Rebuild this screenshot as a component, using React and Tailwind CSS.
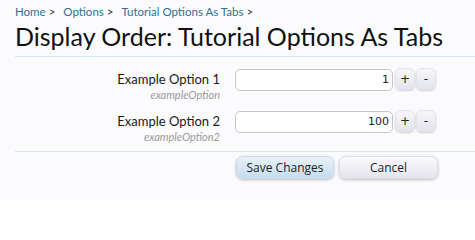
import React from "react";

function Spin({ children }) {
  return (
    <button className="w-[20px] h-[22px] rounded-[6px] border border-[#e2e3ea] bg-gradient-to-b from-[#f7f7fb] to-[#e3e4ec] shadow-[0_1px_2px_rgba(0,0,0,0.18)] text-[12px] leading-none text-[#222] flex items-center justify-center font-['DejaVu_Sans',sans-serif]">
      {children}
    </button>
  );
}

function Row({ label, sub, value }) {
  return (
    <div className="flex items-start h-[42px]">
      <div className="w-[205px] text-right pt-[2px]">
        <div className="text-[13px] leading-[16px] text-[#1a1a1a]">{label}</div>
        <div className="text-[11px] leading-[12px] italic text-[#9a9a9a] mt-[2px]">{sub}</div>
      </div>
      <div className="ml-[15px] w-[158px] h-[22px] rounded-[5px] border border-[#c6c6c6] bg-white flex items-center justify-end pr-[3px] text-[11px] text-[#222] font-['DejaVu_Sans',sans-serif]">
        {value}
      </div>
      <div className="ml-[2px] flex gap-[1px] -mt-[1px]">
        <Spin>+</Spin>
        <Spin>-</Spin>
      </div>
    </div>
  );
}

export default function App() {
  return (
    <div className="w-[475px] h-[200px] bg-[#fbfbfe] font-['Lato',sans-serif] overflow-hidden">
      <div className="pl-[15px] pt-[5px]">
        <div className="h-[14px] text-[11.5px] leading-[14px] text-[#2f6f93] flex">
          <span>Home</span>
          <span className="text-[#333] ml-[3px] mr-[8px]">&gt;</span>
          <span>Options</span>
          <span className="text-[#333] ml-[3px] mr-[8px]">&gt;</span>
          <span>Tutorial Options As Tabs</span>
          <span className="text-[#333] ml-[3px]">&gt;</span>
        </div>
        <h1 className="mt-[2px] h-[36px] text-[25px] leading-[30px] text-[#111] border-b border-[#d4e6f2]">
          Display Order: Tutorial Options As Tabs
        </h1>
        <div className="pt-[12px]">
          <Row label="Example Option 1" sub="exampleOption" value="1" />
          <Row label="Example Option 2" sub="exampleOption2" value="100" />
        </div>
        <div className="border-t border-[#d4e6f2] mt-[-2px] pt-[4px] pl-[221px] flex gap-[5px]">
          <button className="w-[98px] h-[23px] rounded-[7px] border border-[#c9d9e6] bg-gradient-to-b from-[#e9f2f9] to-[#c5dcee] shadow-[0_1px_3px_rgba(0,0,0,0.25)] text-[12px] text-[#222] font-['Open_Sans',sans-serif]">
            Save Changes
          </button>
          <button className="w-[99px] h-[23px] rounded-[7px] border border-[#dcdde4] bg-gradient-to-b from-[#fbfbfd] to-[#e4e5ec] shadow-[0_1px_3px_rgba(0,0,0,0.25)] text-[12px] text-[#222] font-['Open_Sans',sans-serif]">
            Cancel
          </button>
        </div>
      </div>
    </div>
  );
}
